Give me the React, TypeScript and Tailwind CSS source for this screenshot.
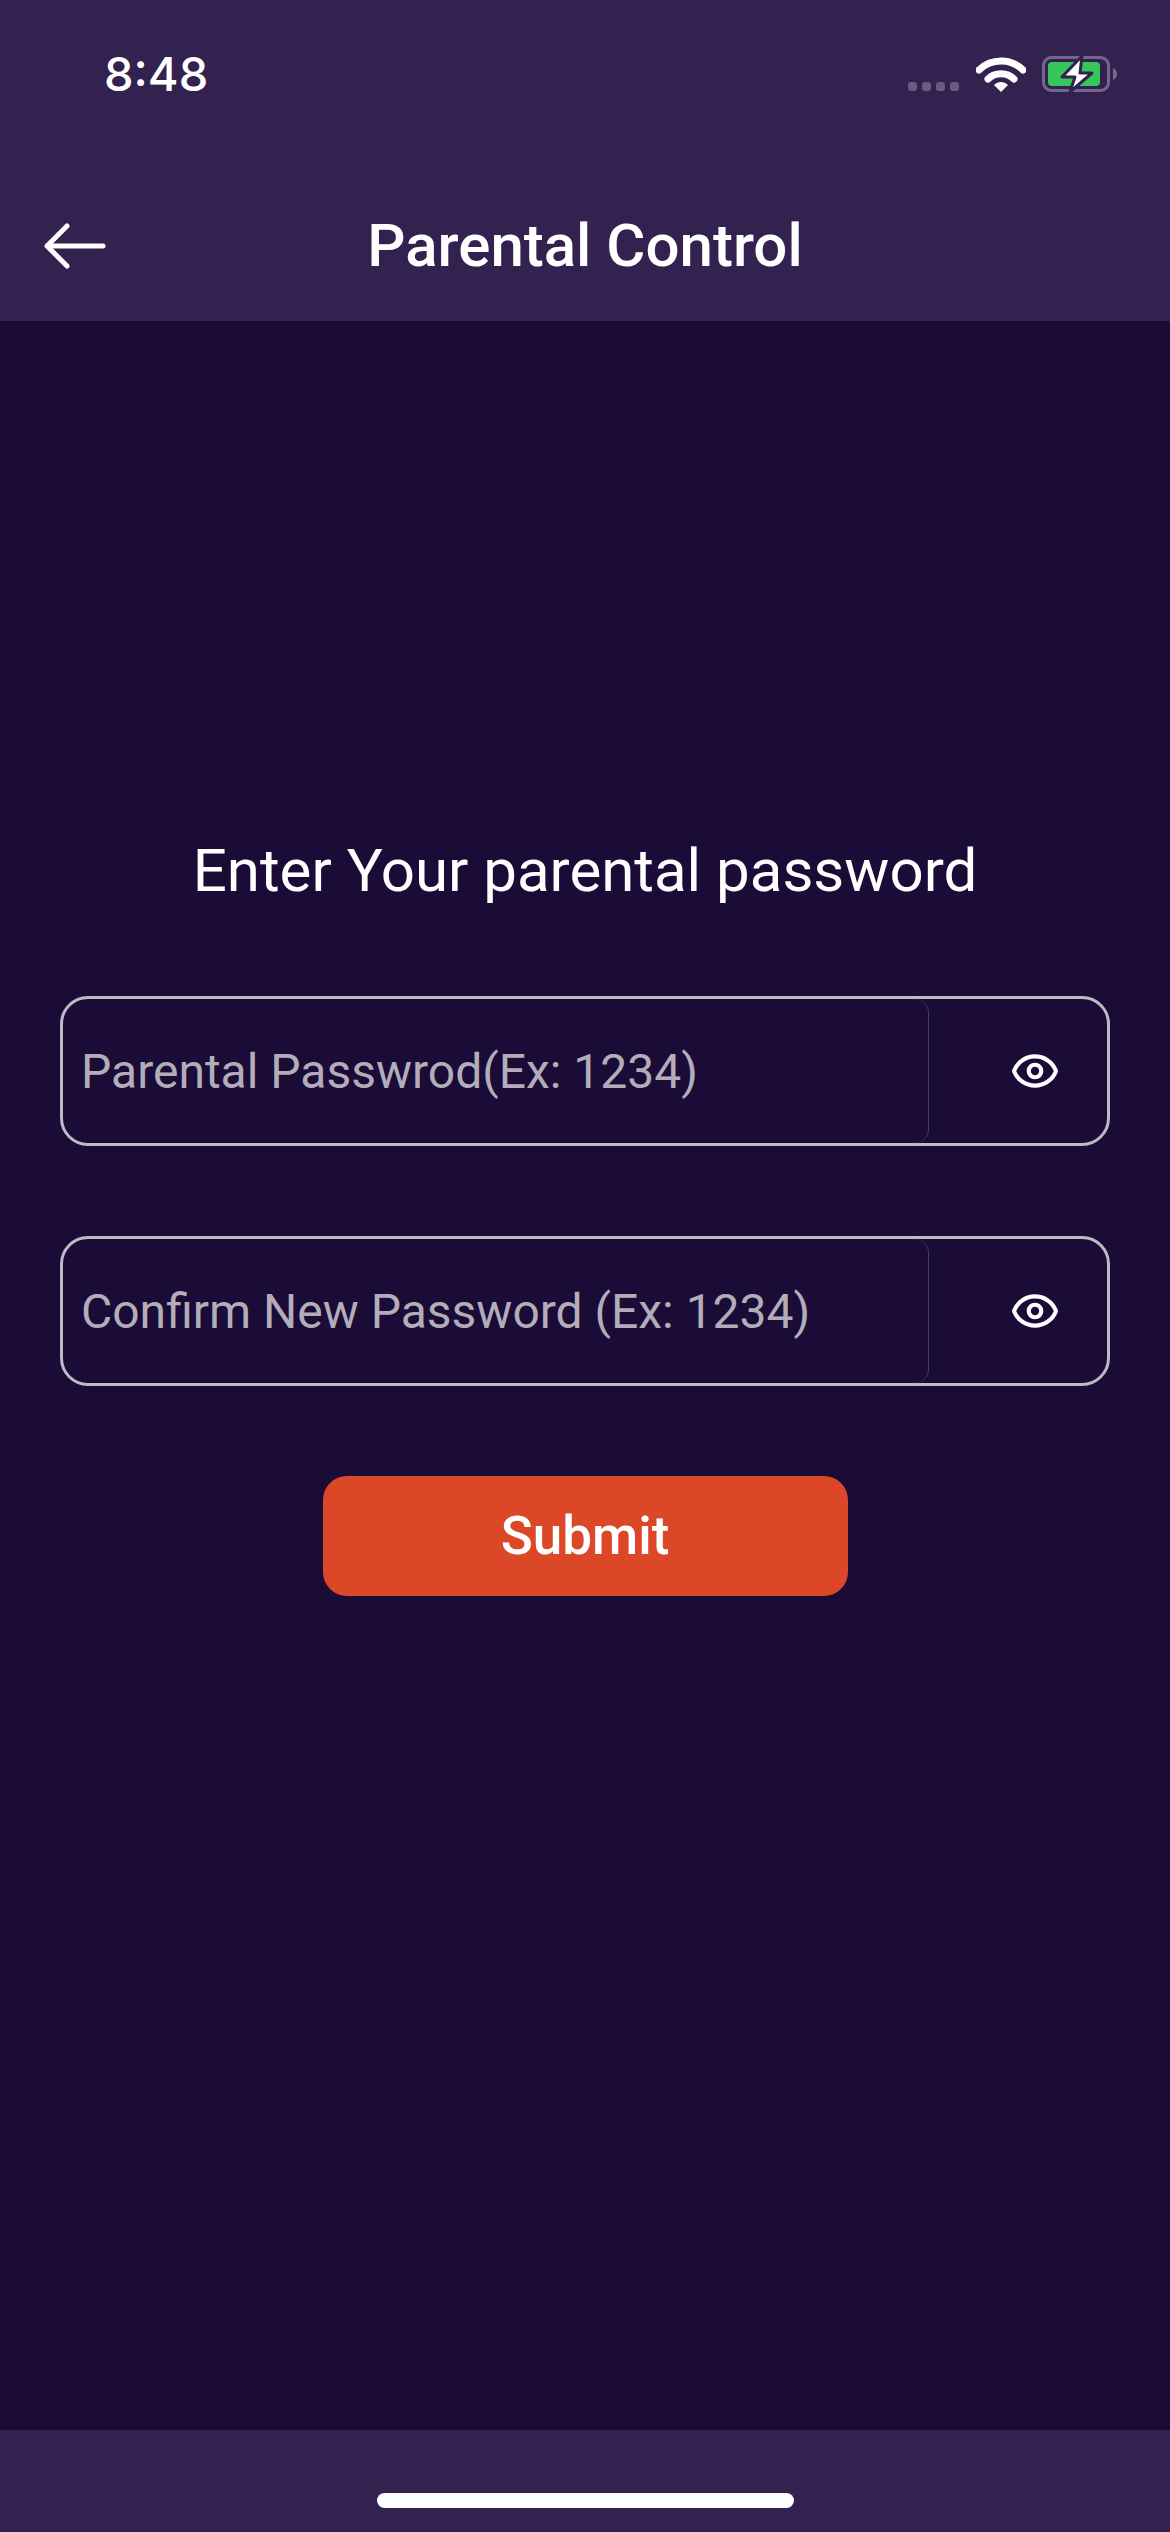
import { Eye } from "lucide-react";

function StatusBar() {
  return (
    <div className="flex h-[146px] items-center justify-between pl-[104px] pr-[52px]">
      <span className="font-['Inter',sans-serif] text-[47px] font-medium leading-none text-white">8:48</span>
      <div className="mt-[2px] flex items-center">
        {/* signal dots */}
        <div className="mr-[17px] mt-[24px] flex gap-[5px]">
          <span className="h-[9px] w-[9px] rounded-[3px] bg-[#6a5a84]" />
          <span className="h-[9px] w-[9px] rounded-[3px] bg-[#6a5a84]" />
          <span className="h-[9px] w-[9px] rounded-[3px] bg-[#6a5a84]" />
          <span className="h-[9px] w-[9px] rounded-[3px] bg-[#6a5a84]" />
        </div>
        <svg width="50" height="38" viewBox="0 0 50 38" className="mr-[16px]">
          <path d="M3 15 C15 3 35 3 47 15" fill="none" stroke="#fff" strokeWidth="7" strokeLinecap="round" />
          <path d="M12 24 C19 17 31 17 38 24" fill="none" stroke="#fff" strokeWidth="7" strokeLinecap="round" />
          <path d="M18 30 C22 26 28 26 32 30 L25 37 Z" fill="#fff" />
        </svg>
        <svg width="76" height="38" viewBox="0 0 76 38">
          <rect x="1.5" y="2.5" width="65" height="33" rx="8" fill="none" stroke="#73658d" strokeWidth="3" />
          <rect x="6" y="7" width="52" height="24" rx="4" fill="#35c759" />
          <path d="M71 13 C74 14 75 17 75 19 C75 21 74 24 71 25 Z" fill="#73658d" />
          <path d="M40 1 L20 22 H33 L28 37 L50 18 H38 Z" fill="#fff" stroke="#33214f" strokeWidth="3" strokeLinejoin="round" />
        </svg>
      </div>
    </div>
  );
}

function PasswordField({ placeholder }: { placeholder: string }) {
  return (
    <div className="flex h-[150px] rounded-[28px] border-[3px] border-[#c0b8c6]">
      <div className="flex flex-1 items-center rounded-r-[14px] border-r-[1px] border-[#4a3e62] pl-[18px] pt-[1px]">
        <span className="font-['Roboto',sans-serif] text-[48px] leading-none text-[#b3adba]">{placeholder}</span>
      </div>
      <div className="flex w-[178px] items-center justify-center pl-[34px]">
        <Eye size={50} strokeWidth={2} className="text-white" />
      </div>
    </div>
  );
}

export default function App() {
  return (
    <div className="flex h-[2532px] w-[1170px] flex-col bg-[#1b0b37] font-['Roboto',sans-serif]">
      <header className="h-[321px] bg-[#332150]">
        <StatusBar />
        <div className="relative flex h-[200px] items-center justify-center">
          <button className="absolute left-[44px] top-[77px]">
            <svg width="62" height="46" viewBox="0 0 62 46" fill="none" stroke="#fff" strokeWidth="5" strokeLinecap="round" strokeLinejoin="round">
              <path d="M59 23 H4" />
              <path d="M23 3 L3 23 L23 43" />
            </svg>
          </button>
          <h1 className="text-[60px] font-medium leading-none text-white">Parental Control</h1>
        </div>
      </header>

      <main className="flex flex-1 flex-col px-[60px] pt-[515px]">
        <h2 className="text-center text-[60px] leading-[70px] text-white">Enter Your parental password</h2>
        <div className="mt-[90px] flex flex-col gap-[90px]">
          <PasswordField placeholder="Parental Passwrod(Ex: 1234)" />
          <PasswordField placeholder="Confirm New Password (Ex: 1234)" />
        </div>
        <button className="mx-auto mt-[90px] flex h-[120px] w-[525px] items-center justify-center rounded-[24px] bg-[#dc4827] pt-[2px] text-[53px] font-medium text-white">
          Submit
        </button>
      </main>

      <footer className="flex h-[102px] items-start justify-center bg-[#332150] pt-[63px]">
        <div className="h-[15px] w-[417px] rounded-full bg-white" />
      </footer>
    </div>
  );
}
